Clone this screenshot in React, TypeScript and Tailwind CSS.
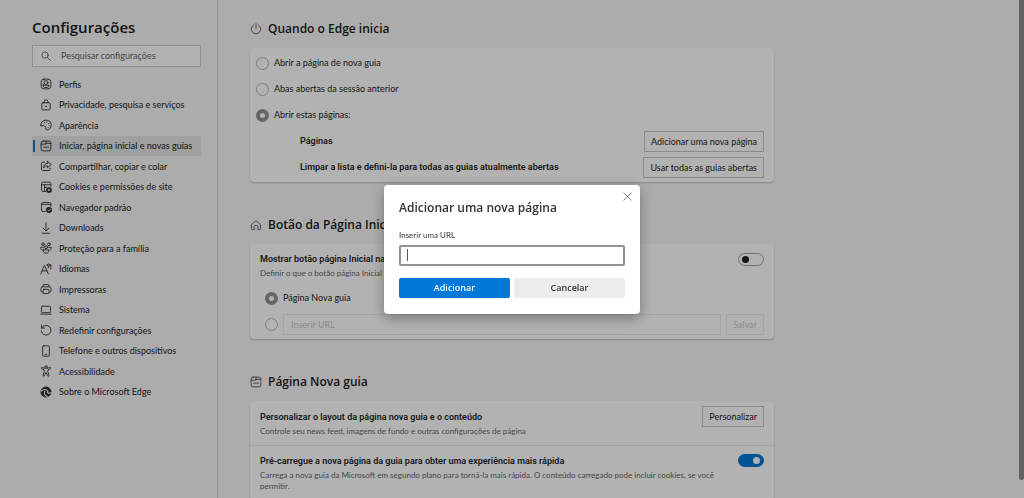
import React from "react";

type IconProps = { children: React.ReactNode; className?: string };

const Icon: React.FC<IconProps> = ({ children, className }) => (
  <svg
    viewBox="0 0 16 16"
    fill="none"
    stroke="currentColor"
    strokeWidth="1.2"
    strokeLinecap="round"
    strokeLinejoin="round"
    aria-hidden="true"
    className={`shrink-0 ${className ?? ""}`}
  >
    {children}
  </svg>
);

const newTabIcon = (
  <>
    <rect x="1.5" y="1.5" width="13" height="13" rx="2.5" />
    <path d="M1.500 5.500h6.500v-4M8 4.500h6.500M5 9.500h6.500" />
  </>
);

const menuItems = [
  {
    label: "Perfis",
    icon: (
      <>
        <rect x="1.5" y="1.5" width="13" height="13" rx="4" />
        <circle cx="8" cy="6" r="2.6" />
        <path d="M4 9.5h8c0 2.3-1.8 3.3-4 3.3s-4-1-4-3.3z" />
      </>
    ),
  },
  {
    label: "Privacidade, pesquisa e serviços",
    icon: (
      <>
        <rect x="2.5" y="5" width="11" height="9.5" rx="1.5" />
        <path d="M5.5 5V3.5a2.5 2.5 0 0 1 5 0V5" />
        <circle cx="8" cy="9.8" r=".6" fill="currentColor" />
      </>
    ),
  },
  {
    label: "Aparência",
    icon: (
      <>
        <path d="M1 8.500C.8 4.500 4 1.500 8 1.500s7 2.600 7 6.500-2.800 6.500-5.500 6.500c-2.200 0-1.500-2-2.200-3.500C6.700 9.500 5.700 8.500 4 8.800 2.500 9.100 1.200 10 1 8.500z" />
        <path d="M6 4.600h.1M9 4.200h.1M11.500 6h.1M12.200 9h.1M10.800 11.500h.1" />
      </>
    ),
  },
  { label: "Iniciar, página inicial e novas guias", icon: newTabIcon, active: true },
  {
    label: "Compartilhar, copiar e colar",
    icon: (
      <>
        <path d="M6 3H3.500A1.500 1.500 0 0 0 2 4.500v8A1.500 1.500 0 0 0 3.500 14h8.500a1.500 1.500 0 0 0 1.500-1.500V11" />
        <path d="M10 1.800l5 4.200-5 4.200V7.800C7.500 7.800 6 8.700 4.800 10.500 5 7 7 4.500 10 4.200z" />
      </>
    ),
  },
  {
    label: "Cookies e permissões de site",
    icon: (
      <>
        <path d="M7.500 14H4a2 2 0 0 1-2-2V3.500a2 2 0 0 1 2-2h8.500a2 2 0 0 1 2 2V7M2 5h12.500M6 5v9M6 8.500h3" />
        <circle cx="12" cy="12" r="2.400" strokeWidth="2.200" />
        <path d="M12 8.400v1M12 14.600v1M8.400 12h1M14.600 12h1M9.500 9.500l.6.6M13.900 13.900l.6.6M14.500 9.500l-.6.6M10.100 13.900l-.6.6" strokeWidth="1.600" />
      </>
    ),
  },
  {
    label: "Navegador padrão",
    icon: (
      <>
        <path d="M7 14H4a2 2 0 0 1-2-2V4a2 2 0 0 1 2-2h8.500a2 2 0 0 1 2 2v3M2 4.500h12.500" />
        <circle cx="12" cy="12" r="3.600" fill="currentColor" />
        <path d="M10.300 12l1.300 1.300 2.200-2.400" stroke="#f7f7f7" />
      </>
    ),
  },
  {
    label: "Downloads",
    icon: <path d="M8 1v10.500M4 8l4 4 4-4M3 15h10" />,
  },
  {
    label: "Proteção para a família",
    icon: (
      <>
        <circle cx="4" cy="3" r="1.800" />
        <circle cx="12" cy="3" r="1.800" />
        <circle cx="8" cy="7" r="2" />
        <path d="M4.200 10.500h7.600c.4 2.600-1.300 4.500-3.800 4.500s-4.200-1.900-3.800-4.500zM4.500 7H1c-.2 2 .6 3.500 2 4.200M11.500 7H15c.2 2-.6 3.500-2 4.200" />
      </>
    ),
  },
  {
    label: "Idiomas",
    icon: <path d="M1 14.500L6 3l5 11.500M2.800 10.500h6.400M9.500 2.500h5V8M14.500 2.500c-2 0-3.500 1.500-3.500 4M11 1L9.500 2.500 11 4.500" />,
  },
  {
    label: "Impressoras",
    icon: (
      <>
        <path d="M4 5V3.500A1.500 1.500 0 0 1 5.500 2h5A1.500 1.500 0 0 1 12 3.500V5M4 12H3a1.700 1.700 0 0 1-1.700-1.700V7.500A2.500 2.500 0 0 1 3.800 5h8.400a2.500 2.500 0 0 1 2.500 2.500v2.800A1.700 1.700 0 0 1 13 12h-1" />
        <rect x="4" y="8.500" width="8" height="5.500" rx="1.200" />
      </>
    ),
  },
  {
    label: "Sistema",
    icon: (
      <>
        <rect x="2" y="3" width="12" height="8.500" rx="1.200" />
        <path d="M1 13.500h14" />
      </>
    ),
  },
  {
    label: "Redefinir configurações",
    icon: <path d="M2 1.500v4h4M2.300 5.300A6.500 6.500 0 1 1 1.600 9" />,
  },
  {
    label: "Telefone e outros dispositivos",
    icon: (
      <>
        <rect x="3.500" y="1" width="9" height="14" rx="1.500" />
        <path d="M7 12.500h2" />
      </>
    ),
  },
  {
    label: "Acessibilidade",
    icon: (
      <>
        <circle cx="8" cy="2.700" r="1.700" />
        <path d="M6 4.500L3 3.300c-1.300-.4-1.900 1.200-.7 1.700L5.500 6.500v3L4 13.500c-.4 1.300 1.200 1.900 1.700.7L8 10l2.300 4.200c.5 1.200 2.100.6 1.700-.7l-1.500-4v-3L13.700 5c1.200-.5.6-2.100-.7-1.700L10 4.500" />
      </>
    ),
  },
  {
    label: "Sobre o Microsoft Edge",
    icon: (
      <>
        <circle cx="8" cy="8" r="6.800" fill="currentColor" />
        <path
          d="M1.500 7C4 4.200 8.500 4 10.300 6.800c.6 1.200-.2 2.200-.2 2.200 1.500.8 3.700.5 5-.5M6.500 7c-1.800 3 .3 6 3.500 7.200"
          stroke="#f7f7f7"
          strokeWidth="1.400"
        />
      </>
    ),
  },
];

const radioClass =
  "h-[13px] w-[13px] shrink-0 appearance-none rounded-full border border-[#b4b4b4] checked:border-4 checked:border-[#929292]";
const switchClass =
  "flex h-[13px] w-[26px] shrink-0 appearance-none items-center rounded-full border border-[#a0a0a0] px-[3px] before:h-[7px] before:w-[7px] before:rounded-full before:bg-[#222] checked:justify-end checked:border-[#0078d4] checked:bg-[#0078d4] checked:before:bg-white";
const buttonClass =
  "h-[21px] shrink-0 border border-[#c8c8c8] px-1.5 text-[9px] leading-none text-[#222]";
const titleClass =
  "font-['Roboto','Noto_Sans',sans-serif] text-[9px] font-semibold leading-[14px] text-[#262626]";
const descClass = "mt-0.5 text-[8px] leading-[11px] text-[#666]";
const headingFont = "font-['Open_Sans','Noto_Sans',sans-serif] font-semibold";

type SectionProps = {
  title: string;
  icon: React.ReactNode;
  children: React.ReactNode;
};

const Section: React.FC<SectionProps> = ({ title, icon, children }) => (
  <section>
    <div className="mb-2 flex h-[22px] items-center gap-1.5">
      <Icon className="h-3 w-3 text-[#555]">{icon}</Icon>
      <h2 className={`text-[12px] text-[#1b1b1b] ${headingFont}`}>{title}</h2>
    </div>
    <div className="rounded-sm bg-white shadow-[0_1px_2px_rgba(0,0,0,0.22)]">
      {children}
    </div>
  </section>
);

const Sidebar: React.FC = () => (
  <aside className="w-[218px] shrink-0 border-r border-[#d6d6d6] pl-8 pr-4 pt-4">
    <h1
      className={`h-[29px] text-[15px] leading-[22px] text-[#1b1b1b] ${headingFont}`}
    >
      Configurações
    </h1>
    <label className="flex h-[22px] items-center gap-2.5 border border-[#cfcfcf] bg-white px-2">
      <Icon className="h-2.5 w-2.5 text-[#444]">
        <circle cx="6.500" cy="6.500" r="5" />
        <path d="M10.200 10.200l5 5" />
      </Icon>
      <input
        type="search"
        aria-label="Pesquisar configurações"
        placeholder="Pesquisar configurações"
        className="w-full min-w-0 bg-transparent text-[9px] outline-none placeholder:text-[#666]"
      />
    </label>
    <nav className="mt-[7px] grid h-[328px] auto-rows-fr">
      {menuItems.map((item) => (
        <a
          key={item.label}
          href="#"
          className={`flex items-center gap-[7px] whitespace-nowrap text-[9px] text-[#222] ${
            item.active ? "bg-[#e5e5e5]" : ""
          }`}
        >
          <span
            className={`ml-px h-3 w-0.5 shrink-0 ${item.active ? "bg-[#0078d4]" : ""}`}
          />
          <Icon className="-ml-0.5 h-3 w-3 text-[#333]">{item.icon}</Icon>
          {item.label}
        </a>
      ))}
    </nav>
  </aside>
);

const StartupSection: React.FC = () => (
  <Section
    title="Quando o Edge inicia"
    icon={<path d="M8 1v6.500M4.500 2.800a6.300 6.300 0 1 0 7 0" />}
  >
    <div className="py-0.5 pl-1.5 pr-2.5 text-[9px] text-[#222]">
      <label className="flex h-[26px] items-center gap-[5px]">
        <input type="radio" name="startup" className={radioClass} />
        Abrir a página de nova guia
      </label>
      <label className="flex h-[26px] items-center gap-[5px]">
        <input type="radio" name="startup" className={radioClass} />
        Abas abertas da sessão anterior
      </label>
      <label className="flex h-[26px] items-center gap-[5px]">
        <input type="radio" name="startup" defaultChecked className={radioClass} />
        Abrir estas páginas:
      </label>
      <div className="flex h-[26px] items-center justify-between pl-11">
        <span className={titleClass}>Páginas</span>
        <button type="button" className={buttonClass}>
          Adicionar uma nova página
        </button>
      </div>
      <div className="flex h-[26px] items-center justify-between pl-11">
        <span className={titleClass}>
          Limpar a lista e defini-la para todas as guias atualmente abertas
        </span>
        <button type="button" className={buttonClass}>
          Usar todas as guias abertas
        </button>
      </div>
    </div>
  </Section>
);

const HomeButtonSection: React.FC = () => (
  <Section
    title="Botão da Página Inicial"
    icon={
      <path d="M2 7.500L8 2l6 5.500v5.700a1 1 0 0 1-1 1h-2.500v-4a1.500 1.500 0 0 0-1.500-1.500H7a1.500 1.500 0 0 0-1.500 1.500v4H3a1 1 0 0 1-1-1z" />
    }
  >
    <div className="px-2.5 pb-0.5 pt-2">
      <div className="flex items-start justify-between">
        <div>
          <label htmlFor="home-button" className={`block ${titleClass}`}>
            Mostrar botão página Inicial na barra de ferramentas
          </label>
          <p className={descClass}>Definir o que o botão página Inicial abre abaixo:</p>
        </div>
        <input
          id="home-button"
          type="checkbox"
          role="switch"
          className={`mt-px ${switchClass}`}
        />
      </div>
      <label className="mt-1.5 flex h-[26px] items-center gap-[5px] pl-[5px] text-[9px] text-[#222]">
        <input type="radio" name="home" defaultChecked className={radioClass} />
        Página Nova guia
      </label>
      <div className="flex h-[26px] items-center gap-[5px] pl-[5px]">
        <input type="radio" name="home" aria-label="Inserir URL" className={radioClass} />
        <input
          type="text"
          aria-label="URL da página inicial"
          placeholder="Inserir URL"
          disabled
          className="h-[21px] min-w-0 flex-1 border border-[#ededed] px-[7px] text-[9px] placeholder:text-[#c8c8c8]"
        />
        <button
          type="button"
          disabled
          className="h-[21px] shrink-0 border border-[#ededed] px-1.5 text-[9px] leading-none text-[#c8c8c8]"
        >
          Salvar
        </button>
      </div>
    </div>
  </Section>
);

const NewTabSection: React.FC = () => (
  <Section title="Página Nova guia" icon={newTabIcon}>
    <div className="flex items-start justify-between border-b border-[#ececec] px-2.5 pb-2 pt-[9px]">
      <div>
        <h3 className={titleClass}>
          Personalizar o layout da página nova guia e o conteúdo
        </h3>
        <p className={descClass}>
          Controle seu news feed, imagens de fundo e outras configurações de página
        </p>
      </div>
      <button type="button" className={`-mt-1 ${buttonClass}`}>
        Personalizar
      </button>
    </div>
    <div className="flex items-start justify-between px-2.5 py-2">
      <div className="max-w-[460px]">
        <label htmlFor="preload" className={`block ${titleClass}`}>
          Pré-carregue a nova página da guia para obter uma experiência mais rápida
        </label>
        <p className={descClass}>
          Carrega a nova guia da Microsoft em segundo plano para torná-la mais
          rápida. O conteúdo carregado pode incluir cookies, se você permitir.
        </p>
      </div>
      <input
        id="preload"
        type="checkbox"
        role="switch"
        defaultChecked
        className={switchClass}
      />
    </div>
  </Section>
);

const AddPageDialog: React.FC = () => (
  <div className="fixed inset-0 flex items-center justify-center bg-black/30">
    <form
      role="dialog"
      aria-modal="true"
      aria-labelledby="dialog-title"
      className="relative w-64 rounded-sm bg-white px-[15px] pb-4 pt-3 shadow-[0_4px_14px_rgba(0,0,0,0.35)]"
    >
      <button
        type="button"
        aria-label="Fechar"
        className="absolute right-2 top-[7px] text-[#444]"
      >
        <Icon className="h-[9px] w-[9px]">
          <path d="M1.500 1.500l13 13M14.500 1.500l-13 13" />
        </Icon>
      </button>
      <h2
        id="dialog-title"
        className={`text-[12px] leading-[22px] text-[#333] ${headingFont}`}
      >
        Adicionar uma nova página
      </h2>
      <label
        htmlFor="page-url"
        className="mt-2.5 block text-[8px] leading-3 text-[#333]"
      >
        Inserir uma URL
      </label>
      <div className="relative mt-1 flex items-center">
        <input
          id="page-url"
          type="text"
          className="h-[21px] w-full rounded-xs border-2 border-[#929292] px-1.5 text-[9px] caret-transparent outline-none"
        />
        <span className="absolute left-2 h-3 w-px bg-[#555]" />
      </div>
      <div className="mt-3 grid grid-cols-2 gap-1 font-['Open_Sans','Noto_Sans',sans-serif] text-[9px] font-semibold">
        <button type="submit" className="h-5 rounded-xs bg-[#0078d7] text-white">
          Adicionar
        </button>
        <button type="button" className="h-5 rounded-xs bg-[#ededed] text-[#333]">
          Cancelar
        </button>
      </div>
    </form>
  </div>
);

const App: React.FC = () => {
  return (
    <div className="flex h-screen overflow-hidden bg-[#f7f7f7] font-['Lato','Noto_Sans',sans-serif]">
      <Sidebar />
      <main className="flex min-w-0 flex-1 flex-col gap-8 pl-8 pt-[18px]">
        <div className="flex max-w-[524px] flex-col gap-8">
          <StartupSection />
          <HomeButtonSection />
          <NewTabSection />
        </div>
      </main>
      <div className="w-[5px] shrink-0">
        <div className="h-[480px] max-h-full rounded-b-full bg-[#8c8c8c]" />
      </div>
      <AddPageDialog />
    </div>
  );
};

export default App;
